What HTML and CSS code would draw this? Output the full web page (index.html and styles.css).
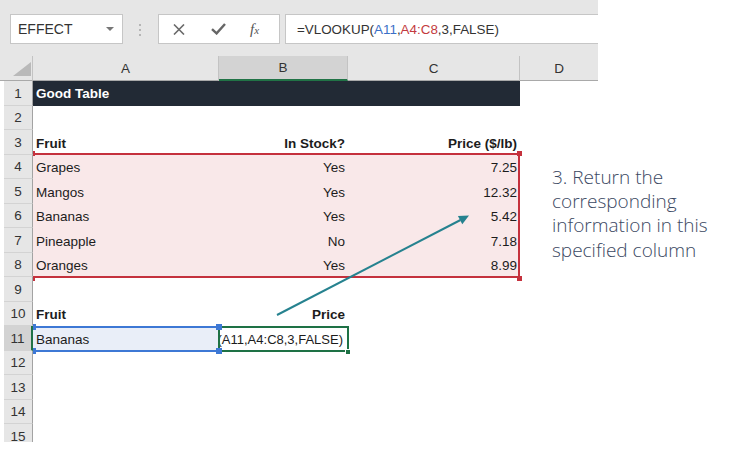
FILE: index.html
```html
<!DOCTYPE html>
<html>
<head>
<meta charset="utf-8">
<link rel="stylesheet" href="styles.css">
</head>
<body>
<div class="page">
  <div class="app">
    <div class="toolbar">
      <div class="namebox"><span>EFFECT</span><span class="caret"></span></div>
      <div class="grip"><i></i><i></i><i></i></div>
      <div class="btns">
        <svg class="ic-x" width="12" height="11" viewBox="0 0 12 11"><path d="M1 0.5 L11 10.5 M11 0.5 L1 10.5" stroke="#6a6a6a" stroke-width="1.6" fill="none"/></svg>
        <svg class="ic-ok" width="15" height="12" viewBox="0 0 15 12"><path d="M1 6.2 L5.6 10.4 L14 1" stroke="#666" stroke-width="2.4" fill="none"/></svg>
        <span class="fx">f<small>x</small></span>
      </div>
      <div class="formula">=VLOOKUP(<span class="ref-a">A11</span>,<span class="ref-b">A4:C8</span>,3,FALSE)</div>
    </div>

    <div class="sheet">
      <div class="colheads">
        <div class="ch corner"><div class="tri"></div></div>
        <div class="ch">A</div>
        <div class="ch sel">B</div>
        <div class="ch">C</div>
        <div class="ch last">D</div>
      </div>

      <div class="row"><div class="rh">1</div><div class="c band b">Good Table</div><div class="c band"></div><div class="c band"></div><div class="c"></div></div>
      <div class="row"><div class="rh">2</div><div class="c"></div><div class="c"></div><div class="c"></div><div class="c"></div></div>
      <div class="row"><div class="rh">3</div><div class="c b">Fruit</div><div class="c b r">In Stock?</div><div class="c b r">Price ($/lb)</div><div class="c"></div></div>
      <div class="row"><div class="rh">4</div><div class="c pink">Grapes</div><div class="c pink r">Yes</div><div class="c pink r">7.25</div><div class="c"></div></div>
      <div class="row"><div class="rh">5</div><div class="c pink">Mangos</div><div class="c pink r">Yes</div><div class="c pink r">12.32</div><div class="c"></div></div>
      <div class="row"><div class="rh">6</div><div class="c pink">Bananas</div><div class="c pink r">Yes</div><div class="c pink r">5.42</div><div class="c"></div></div>
      <div class="row"><div class="rh">7</div><div class="c pink">Pineapple</div><div class="c pink r">No</div><div class="c pink r">7.18</div><div class="c"></div></div>
      <div class="row"><div class="rh">8</div><div class="c pink">Oranges</div><div class="c pink r">Yes</div><div class="c pink r">8.99</div><div class="c"></div></div>
      <div class="row"><div class="rh">9</div><div class="c"></div><div class="c"></div><div class="c"></div><div class="c"></div></div>
      <div class="row"><div class="rh">10</div><div class="c b">Fruit</div><div class="c b r">Price</div><div class="c"></div><div class="c"></div></div>
      <div class="row"><div class="rh sel">11</div><div class="c blue">Bananas</div><div class="c r edit"><span>=VLOOKUP(A11,A4:C8,3,FALSE)</span></div><div class="c"></div><div class="c"></div></div>
      <div class="row"><div class="rh">12</div><div class="c"></div><div class="c"></div><div class="c"></div><div class="c"></div></div>
      <div class="row"><div class="rh">13</div><div class="c"></div><div class="c"></div><div class="c"></div><div class="c"></div></div>
      <div class="row"><div class="rh">14</div><div class="c"></div><div class="c"></div><div class="c"></div><div class="c"></div></div>
      <div class="row"><div class="rh">15</div><div class="c"></div><div class="c"></div><div class="c"></div><div class="c"></div></div>

      <div class="range-red"></div>
      <div class="hd hd-red hr-tl"></div>
      <div class="hd hd-red hr-tr"></div>
      <div class="hd hd-red hr-bl"></div>
      <div class="hd hd-red hr-br"></div>

      <div class="active"></div>
      <div class="fillh"></div>

      <div class="range-blue"></div>
      <div class="hd hd-blue hb-tl"></div>
      <div class="hd hd-blue hb-tr"></div>
      <div class="hd hd-blue hb-bl"></div>
      <div class="hd hd-blue hb-br"></div>
    </div>
  </div>

  <svg class="arrow" width="738" height="450" viewBox="0 0 738 450">
    <line x1="277" y1="315" x2="460.5" y2="220" stroke="#26828f" stroke-width="2"/>
    <polygon points="469,215.5 462.3,224.3 457.9,216" fill="#26828f"/>
  </svg>

  <div class="note">3. Return the<br>corresponding<br>information in this<br>specified column</div>
</div>
</body>
</html>
```
FILE: styles.css
```css
* { box-sizing: border-box; }

body {
  margin: 0;
  background: #fff;
  font-family: "Liberation Sans", Arial, sans-serif;
}

.page {
  position: relative;
  width: 738px;
  height: 450px;
  overflow: hidden;
}

.app { width: 598px; }

/* ---------- toolbar ---------- */
.toolbar {
  height: 56px;
  background: #e6e6e6;
  display: flex;
  align-items: flex-start;
  padding: 14px 0 0 10px;
}

.namebox {
  width: 113px;
  height: 30px;
  background: #fff;
  border: 1px solid #c6c6c6;
  display: flex;
  align-items: center;
  justify-content: space-between;
  padding: 0 8px 0 7px;
  font-size: 14px;
  color: #333;
}

.caret {
  width: 0;
  height: 0;
  border-left: 4px solid transparent;
  border-right: 4px solid transparent;
  border-top: 4px solid #777;
}

.grip {
  display: flex;
  flex-direction: column;
  gap: 3px;
  margin: 10px 17px 0 16px;
}

.grip i {
  display: block;
  width: 2px;
  height: 2px;
  background: #b5b5b5;
}

.btns {
  width: 122px;
  height: 30px;
  background: #fff;
  border: 1px solid #c6c6c6;
  display: flex;
  align-items: center;
  padding-left: 14px;
}

.ic-x { display: block; }
.ic-ok { display: block; margin-left: 26px; }

.fx {
  margin-left: 24px;
  font-family: "Liberation Serif", "Times New Roman", serif;
  font-style: italic;
  font-size: 15px;
  color: #555;
  line-height: 1;
}

.fx small { font-size: 11px; }

.formula {
  flex: 1;
  height: 30px;
  margin-left: 5px;
  background: #fff;
  border: 1px solid #c6c6c6;
  border-right: none;
  display: flex;
  align-items: center;
  padding-left: 11px;
  font-size: 13.4px;
  color: #333;
  white-space: nowrap;
}

.ref-a { color: #3b6fc6; }
.ref-b { color: #c33a40; }

/* ---------- sheet ---------- */
.sheet {
  position: relative;
  height: 386px;
  overflow: hidden;
  font-size: 13.5px;
  color: #1c1c1c;
}

.colheads {
  display: grid;
  grid-template-columns: 33px 186px 129px 172px 78px;
  height: 25px;
  background: #e6e6e6;
}

.ch {
  border-right: 1px solid #c3c3c3;
  border-bottom: 1px solid #a9a9a9;
  display: flex;
  align-items: center;
  justify-content: center;
  color: #333;
}

.ch.last { border-right: none; }

.ch.sel {
  background: #d3d3d3;
  border-bottom: 2px solid #217346;
}

.corner {
  align-items: flex-end;
  justify-content: flex-end;
  padding: 0 1px 4px 0;
}

.tri {
  width: 18px;
  height: 14px;
  background: #b9b9b9;
  clip-path: polygon(100% 0, 100% 100%, 0 100%);
}

.row {
  display: grid;
  grid-template-columns: 29px 186px 129px 172px 78px;
  height: 24.5px;
  margin-left: 4px;
}

.rh {
  background: #e6e6e6;
  border-right: 1px solid #a3a3a3;
  border-bottom: 1px solid #d3d3d3;
  display: flex;
  align-items: flex-end;
  justify-content: center;
  padding-bottom: 3px;
  line-height: 16px;
  color: #333;
}

.rh.sel {
  background: #d3d3d3;
  border-right: 2px solid #217346;
}

.c {
  display: flex;
  align-items: flex-end;
  padding: 0 3px 3px;
  line-height: 16px;
  white-space: nowrap;
  overflow: hidden;
}

.r { justify-content: flex-end; }
.b { font-weight: bold; }

.band { background: #222a35; color: #fff; padding-bottom: 4px; }
.pink { background: #f9e8e9; }
.blue { background: #e9eef8; }

.edit { padding-right: 5px; font-size: 13px; }
.edit span { flex: none; }

/* ---------- selection overlays ---------- */
.range-red {
  position: absolute;
  left: 33px;
  top: 96.5px;
  width: 487px;
  height: 125.5px;
  border: 2px solid #c5313d;
  border-left: none;
}

.hd { position: absolute; }
.hd-red { background: #c5313d; width: 5px; height: 5px; }
.hr-tl { left: 33px; top: 95px; width: 2px; }
.hr-tr { left: 517px; top: 95px; }
.hr-bl { left: 33px; top: 219.5px; width: 2px; }
.hr-br { left: 517px; top: 219.5px; }

.active {
  position: absolute;
  left: 218px;
  top: 269.5px;
  width: 131px;
  height: 26.5px;
  border: 2px solid #1e7145;
}

.fillh {
  position: absolute;
  left: 345px;
  top: 292.5px;
  width: 6px;
  height: 6px;
  background: #1e7145;
  border: 1px solid #fff;
}

.range-blue {
  position: absolute;
  left: 33px;
  top: 270px;
  width: 185px;
  height: 25.5px;
  border-top: 2px solid #3d78d5;
  border-bottom: 2px solid #3d78d5;
}

.hd-blue { background: #3d78d5; width: 6px; height: 6px; }
.hb-tl { left: 33px; top: 268px; width: 3px; }
.hb-tr { left: 215.5px; top: 268px; }
.hb-bl { left: 33px; top: 291.5px; width: 3px; }
.hb-br { left: 215.5px; top: 291.5px; }

/* ---------- annotation ---------- */
.arrow {
  position: absolute;
  left: 0;
  top: 0;
  pointer-events: none;
}

.note {
  position: absolute;
  left: 552px;
  top: 164.8px;
  font-family: "Open Sans", "Noto Sans", sans-serif;
  font-weight: 300;
  font-size: 19px;
  line-height: 24.3px;
  color: #3b4862;
}
```
